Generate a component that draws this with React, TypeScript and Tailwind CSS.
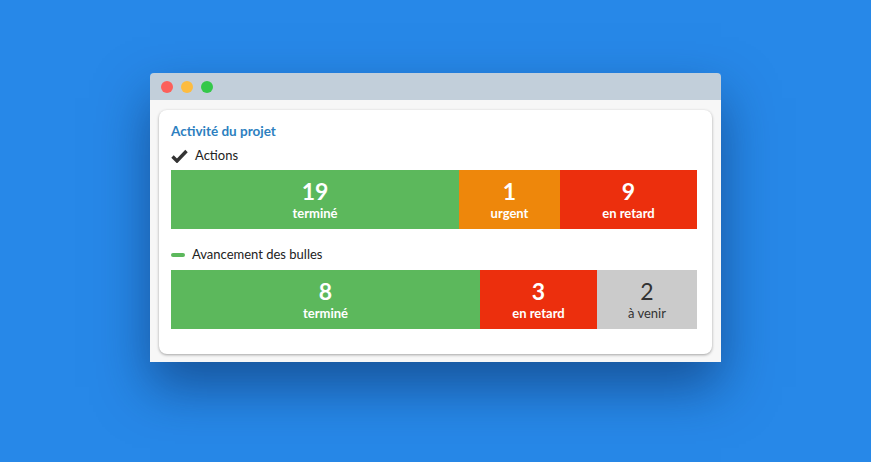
export default function App() {
  const Seg = ({ w, bg, n, l, dark }: { w: number; bg: string; n: string; l: string; dark?: boolean }) => (
    <div className={`flex flex-col items-center justify-center ${bg} ${dark ? "text-[#333]" : "text-white"}`} style={{ width: w }}>
      <div className={`text-[23px] leading-[26px] ${dark ? "font-normal" : "font-bold"}`}>{n}</div>
      <div className={`text-[13px] leading-[18px] ${dark ? "font-normal" : "font-bold"}`}>{l}</div>
    </div>
  );
  return (
    <div className="w-[871px] h-[462px] bg-[#2788e8] relative overflow-hidden" style={{ fontFamily: "Lato, 'Open Sans', sans-serif" }}>
      <div className="absolute left-[150px] top-[73px] w-[571px] h-[289px] flex flex-col shadow-[0_25px_50px_rgba(10,40,90,0.55)]">
        <div className="h-[27px] bg-[#c2cfda] rounded-t-[4px] flex items-center gap-[8px] pl-[11px]">
          <div className="w-[12px] h-[12px] rounded-full bg-[#fc605b]" />
          <div className="w-[12px] h-[12px] rounded-full bg-[#fdbc40]" />
          <div className="w-[12px] h-[12px] rounded-full bg-[#34c84a]" />
        </div>
        <div className="flex-1 bg-[#f7f7f7] px-[9px] pt-[10px] pb-[8px]">
          <div className="bg-white rounded-[8px] shadow-[0_1px_3px_rgba(0,0,0,0.35)] px-[12px] pt-[13px] h-[244px]">
            <div className="text-[#2d7fc0] font-bold text-[13.5px] leading-[16px]">Activité du projet</div>
            <div className="flex items-center gap-[7px] mt-[8px] h-[18px] text-[13px] text-[#222]">
              <svg width="17" height="14" viewBox="0 0 17 14"><path d="M1.5 7.5 L6 12 L15.5 2" stroke="#333" strokeWidth="3.4" fill="none" /></svg>
              Actions
            </div>
            <div className="flex h-[59px] mt-[5px]">
              <Seg w={288} bg="bg-[#5cb85c]" n="19" l="terminé" />
              <Seg w={101} bg="bg-[#ee870b]" n="1" l="urgent" />
              <Seg w={137} bg="bg-[#ec2f0d]" n="9" l="en retard" />
            </div>
            <div className="flex items-center gap-[7px] mt-[17px] h-[18px] text-[13px] text-[#222]">
              <div className="w-[14px] h-[4px] rounded-[2px] bg-[#5cb85c]" />
              Avancement des bulles
            </div>
            <div className="flex h-[59px] mt-[6px]">
              <Seg w={309} bg="bg-[#5cb85c]" n="8" l="terminé" />
              <Seg w={117} bg="bg-[#ec2f0d]" n="3" l="en retard" />
              <Seg w={100} bg="bg-[#cbcbcb]" n="2" l="à venir" dark />
            </div>
          </div>
        </div>
      </div>
    </div>
  );
}
